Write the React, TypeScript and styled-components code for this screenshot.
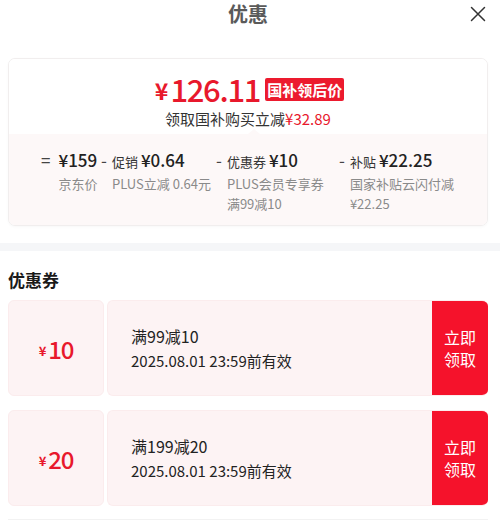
import React from 'react';
import styled, { createGlobalStyle } from 'styled-components';

const GlobalStyle = createGlobalStyle`
    body {
        margin: 0;
        background: #fff;
        font-family: "Noto Sans CJK SC", "Noto Sans", sans-serif;
    }
`

type PartType = {
    sign: string
    name?: string
    amount: string
    label: string[]
    width?: number
}

type CouponType = {
    value: string
    rule: string
    expire: string
}

const parts: PartType[] = [
    { sign: '=', amount: '¥159', label: ['京东价'], width: 62 },
    { sign: '-', name: '促销', amount: '¥0.64', label: ['PLUS立减 0.64元'], width: 115 },
    { sign: '-', name: '优惠券', amount: '¥10', label: ['PLUS会员专享券', '满99减10'], width: 123 },
    { sign: '-', name: '补贴', amount: '¥22.25', label: ['国家补贴云闪付减', '¥22.25'] },
]

const coupons: CouponType[] = [
    { value: '10', rule: '满99减10', expire: '2025.08.01 23:59前有效' },
    { value: '20', rule: '满199减20', expire: '2025.08.01 23:59前有效' },
]

const CloseIcon = () => (
    <svg width="16" height="16" viewBox="0 0 16 16" fill="none">
        <path d="M1.5 1.5L14.5 14.5M14.5 1.5L1.5 14.5" stroke="#333" strokeWidth="1.5" strokeLinecap="round" />
    </svg>
)

export default function App() {
    return (
        <Page>
            <GlobalStyle />
            <Header>
                <Title>优惠</Title>
                <Close><CloseIcon /></Close>
            </Header>

            <Summary>
                <SummaryTop>
                    <PriceRow>
                        <Price><small>¥</small>126.11</Price>
                        <Tag>国补领后价</Tag>
                    </PriceRow>
                    <Saving>领取国补购买立减<em>¥32.89</em></Saving>
                </SummaryTop>
                <Breakdown>
                    {parts.map((p, i) => (
                        <Part key={i} $width={p.width}>
                            <Sign $wide={p.sign === '='}>{p.sign}</Sign>
                            <PartBody>
                                <PartMain>
                                    {p.name && <PartName>{p.name}</PartName>}
                                    <Amount>{p.amount}</Amount>
                                </PartMain>
                                {p.label.map(line => <LabelLine key={line}>{line}</LabelLine>)}
                            </PartBody>
                        </Part>
                    ))}
                </Breakdown>
            </Summary>

            <Band />

            <SectionTitle>优惠券</SectionTitle>
            <CouponList>
                {coupons.map((c, i) => (
                    <Coupon key={i}>
                        <CouponValue><small>¥</small>{c.value}</CouponValue>
                        <CouponBody>
                            <CouponInfo>
                                <Rule>{c.rule}</Rule>
                                <Expire>{c.expire}</Expire>
                            </CouponInfo>
                            <TakeButton>立即<br />领取</TakeButton>
                        </CouponBody>
                    </Coupon>
                ))}
            </CouponList>
            <Divider />
        </Page>
    )
}

const Page = styled.div`
    width: 500px;
    height: 526px;
    overflow: hidden;
    color: #333;
`

const Header = styled.div`
    position: relative;
    height: 28px;
    display: flex;
    justify-content: center;
    align-items: center;
`

const Title = styled.h1`
    margin: 0 0 0 -4px;
    font-size: 20px;
    line-height: 28px;
    font-weight: 700;
    color: #5a5a5a;
`

const Close = styled.span`
    position: absolute;
    right: 14px;
    top: 6px;
    display: flex;
`

const Summary = styled.div`
    margin: 30px 0 0 8px;
    width: 480px;
    border: 1px solid #f1eeee;
    border-radius: 7px;
    overflow: hidden;
    box-shadow: 0 1px 3px rgba(0, 0, 0, 0.03);
    box-sizing: border-box;
`

const SummaryTop = styled.div`
    background: #fff;
    padding: 11px 0 4px;
    display: flex;
    flex-direction: column;
    align-items: center;
`

const PriceRow = styled.div`
    display: flex;
    align-items: center;
    gap: 5px;
    height: 38px;
    margin-left: 3px;
`

const Price = styled.div`
    display: flex;
    align-items: center;
    color: #e8182c;
    font-size: 31px;
    font-weight: 500;
    line-height: 38px;
    letter-spacing: -1.3px;
    small {
        font-size: 23px;
        font-weight: 700;
        margin: 2px 2px 0 0;
        letter-spacing: 0;
    }
`

const Tag = styled.span`
    background: #ec1a2e;
    color: #fff;
    font-size: 15px;
    font-weight: 700;
    line-height: 23px;
    padding: 0 2px;
    border-radius: 2px;
    margin-top: 1px;
`

const Saving = styled.div`
    font-size: 15px;
    line-height: 22px;
    height: 22px;
    color: #333;
    em {
        font-style: normal;
        color: #e8182c;
    }
`

const Breakdown = styled.div`
    position: relative;
    background: #fdf8f8;
    display: flex;
    padding: 12px 0 11px 30px;
    &::before {
        content: '';
        position: absolute;
        top: -5px;
        left: 239px;
        border-left: 6px solid transparent;
        border-right: 6px solid transparent;
        border-bottom: 5px solid #fdf8f8;
    }
`

const Part = styled.div<{ $width?: number }>`
    display: flex;
    align-items: flex-start;
    ${p => p.$width ? `width: ${p.$width}px;` : 'flex: 1;'}
`

const Sign = styled.span<{ $wide: boolean }>`
    font-size: 17px;
    line-height: 28px;
    color: #444;
    flex-shrink: 0;
    margin: 0 ${p => p.$wide ? '8px' : '5px'} 0 ${p => p.$wide ? '2px' : '0'};
`

const PartBody = styled.div`
    display: flex;
    flex-direction: column;
`

const PartMain = styled.div`
    display: flex;
    align-items: baseline;
    gap: 3px;
    height: 28px;
    line-height: 28px;
    white-space: nowrap;
`

const PartName = styled.span`
    font-size: 13px;
    color: #333;
`

const Amount = styled.span`
    font-size: 17px;
    font-weight: 500;
    color: #222;
`

const LabelLine = styled.div`
    font-size: 13px;
    line-height: 20px;
    height: 20px;
    color: #8a8a8a;
    white-space: nowrap;
`

const Band = styled.div`
    margin-top: 17px;
    height: 8px;
    background: #f5f6f8;
`

const SectionTitle = styled.h2`
    margin: 17px 0 0 8px;
    font-size: 17px;
    line-height: 24px;
    font-weight: 700;
    color: #1a1a1a;
`

const CouponList = styled.div`
    display: flex;
    flex-direction: column;
    gap: 14px;
    margin: 8px 0 0 8px;
    width: 480px;
`

const Coupon = styled.div`
    display: flex;
    height: 96px;
    gap: 3px;
`

const CouponValue = styled.div`
    width: 96px;
    flex-shrink: 0;
    background: #fdf3f4;
    border: 1px solid #fbeced;
    border-radius: 6px;
    box-sizing: border-box;
    display: flex;
    align-items: center;
    justify-content: center;
    color: #e8182c;
    font-size: 24px;
    font-weight: 500;
    letter-spacing: -1.2px;
    small {
        font-size: 13px;
        font-weight: 700;
        margin-right: 2px;
        margin-top: 5px;
        letter-spacing: 0;
    }
`

const CouponBody = styled.div`
    flex: 1;
    display: flex;
    background: #fdf3f4;
    border: 1px solid #fbeced;
    border-right: none;
    border-radius: 6px;
    overflow: hidden;
    box-sizing: border-box;
`

const CouponInfo = styled.div`
    flex: 1;
    display: flex;
    flex-direction: column;
    justify-content: center;
    padding-left: 23px;
    gap: 2px;
`

const Rule = styled.div`
    font-size: 16px;
    line-height: 23px;
    color: #222;
`

const Expire = styled.div`
    font-size: 15px;
    line-height: 22px;
    color: #222;
`

const TakeButton = styled.button`
    width: 56px;
    border: none;
    background: #f5122b;
    color: #fff;
    font-family: inherit;
    font-size: 16px;
    line-height: 22px;
    padding: 0;
    cursor: pointer;
`

const Divider = styled.div`
    margin: 13px 0 0 8px;
    width: 480px;
    height: 1px;
    background: #f2f2f2;
`
